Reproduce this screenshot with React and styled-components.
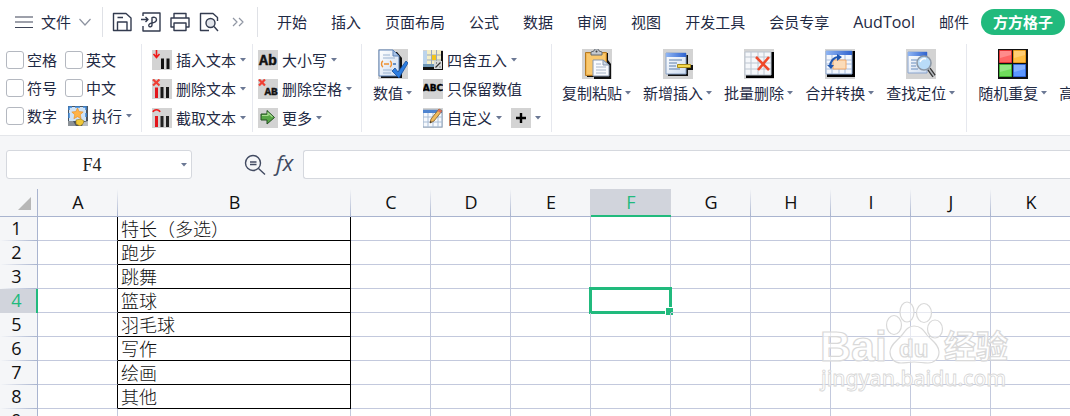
import React from 'react'
import styled, { createGlobalStyle, css } from 'styled-components'

const UI_FONT = '"Open Sans", "Noto Sans CJK SC", sans-serif'
const INK = '#1f2a44'
const GREEN = '#21ba7d'
const LINE = '#c3c9dd'
const LINE_DARK = '#a9b4cf'

const TABS = ['开始', '插入', '页面布局', '公式', '数据', '审阅', '视图', '开发工具', '会员专享', 'AudTool', '邮件', '方方格子']
const COLUMNS = ['A', 'B', 'C', 'D', 'E', 'F', 'G', 'H', 'I', 'J', 'K', 'L']
const ROWS = ['特长（多选）', '跑步', '跳舞', '篮球', '羽毛球', '写作', '绘画', '其他', '']

export default function App() {
	return (
		<Page>
			<GlobalStyle />

			<TopBar>
				<FileButton>
					<MenuIcon />
					文件
					<ChevronIcon />
				</FileButton>
				<QuickTools>
					<ToolButton aria-label="保存"><SaveIcon /></ToolButton>
					<ToolButton aria-label="输出为PDF"><PdfIcon /></ToolButton>
					<ToolButton aria-label="打印"><PrintIcon /></ToolButton>
					<ToolButton aria-label="打印预览"><PreviewIcon /></ToolButton>
					<ToolButton aria-label="更多工具"><MoreIcon /></ToolButton>
				</QuickTools>
				<Tabs>
					{TABS.map(tab => (
						<Tab key={tab} $active={tab === '方方格子'} $latin={tab === 'AudTool'}>{tab}</Tab>
					))}
				</Tabs>
			</TopBar>

			<Ribbon>
				<Group $left={6} $right={9}>
					<CheckGrid>
						<Check label="空格" />
						<Check label="英文" />
						<Check label="符号" />
						<Check label="中文" />
						<Check label="数字" />
						<RunButton><RunIcon />执行<Caret /></RunButton>
					</CheckGrid>
				</Group>

				<Group $left={10} $right={6}>
					<Stack>
						<SmallButton><InsertTextIcon />插入文本<Caret /></SmallButton>
						<SmallButton><DeleteTextIcon />删除文本<Caret /></SmallButton>
						<SmallButton><CutTextIcon />截取文本<Caret /></SmallButton>
					</Stack>
				</Group>

				<Group $left={5} $right={9}>
					<Stack>
						<SmallButton><CaseIcon />大小写<Caret /></SmallButton>
						<SmallButton><DeleteSpaceIcon />删除空格<Caret /></SmallButton>
						<SmallButton><ArrowIcon />更多<Caret /></SmallButton>
					</Stack>
				</Group>

				<Group $left={11} $right={10}>
					<BigButton><NumberIcon /><BigLabel>数值<Caret /></BigLabel></BigButton>
					<NumberStack>
						<SmallButton><RoundIcon />四舍五入<Caret /></SmallButton>
						<SmallButton><AbcIcon />只保留数值</SmallButton>
						<ButtonPair>
							<SmallButton><CustomIcon />自定义<Caret /></SmallButton>
							<SmallButton aria-label="添加"><PlusIcon /><Caret /></SmallButton>
						</ButtonPair>
					</NumberStack>
				</Group>

				<Group $left={10} $right={11}>
					<BigButton><PasteIcon /><BigLabel>复制粘贴<Caret /></BigLabel></BigButton>
					<BigButton><InsertIcon /><BigLabel>新增插入<Caret /></BigLabel></BigButton>
					<BigButton><BatchDeleteIcon /><BigLabel>批量删除<Caret /></BigLabel></BigButton>
					<BigButton><MergeIcon /><BigLabel>合并转换<Caret /></BigLabel></BigButton>
					<BigButton><FindIcon /><BigLabel>查找定位<Caret /></BigLabel></BigButton>
				</Group>

				<Group $left={11} $right={11}>
					<BigButton><RandomIcon /><BigLabel>随机重复<Caret /></BigLabel></BigButton>
					<BigButton><BlankIcon /><BigLabel>高级排序<Caret /></BigLabel></BigButton>
				</Group>
			</Ribbon>

			<FormulaBar>
				<NameBox>
					<NameInput aria-label="名称框" defaultValue="F4" />
					<NameArrow aria-label="展开名称框"><Caret /></NameArrow>
				</NameBox>
				<FormulaTools>
					<ToolButton aria-label="浏览公式"><ZoomIcon /></ToolButton>
					<FxButton>fx</FxButton>
				</FormulaTools>
				<FormulaInput aria-label="编辑栏" />
			</FormulaBar>

			<SheetArea>
				<Sheet>
					<colgroup>
						<Col $width={38} />
						{COLUMNS.map(name => <Col key={name} $width={name === 'B' ? 233 : 80} />)}
					</colgroup>
					<thead>
						<tr>
							<Corner aria-label="全选"><CornerIcon /></Corner>
							{COLUMNS.map(name => (
								<ColumnHead key={name} scope="col" $active={name === 'F'} $before={name === 'E'}>{name}</ColumnHead>
							))}
						</tr>
					</thead>
					<tbody>
						{ROWS.map((text, index) => (
							<tr key={index}>
								<RowHead scope="row" $active={index === 3}>{index + 1}</RowHead>
								{COLUMNS.map(name => (
									<Cell
										key={name}
										$boxed={name === 'B' && index < 8}
										$beforeBox={name === 'A' && index < 8}
									>
										{name === 'B' && text}
										{name === 'F' && index === 3 && <Selection />}
									</Cell>
								))}
							</tr>
						))}
					</tbody>
				</Sheet>
				<Watermark />
			</SheetArea>
		</Page>
	)
}

const Check = ({ label }) => (
	<CheckLabel>
		<CheckBox type="checkbox" />
		{label}
	</CheckLabel>
)

const Caret = () => (
	<svg width="6" height="4" viewBox="0 0 6 4" aria-hidden="true">
		<path d="M0 0h6L3 3.500z" fill="#6b7894" />
	</svg>
)


// * Top bar icons
const MenuIcon = () => (
	<svg width="18" height="14" viewBox="0 0 18 14" stroke="#3c4356" strokeWidth="1.200">
		<path d="M0 2h18M0 7h18M0 12.500h18" />
	</svg>
)

const ChevronIcon = () => (
	<svg width="12" height="8" viewBox="0 0 12 8" fill="none" stroke="#8d93a0" strokeWidth="1.200">
		<path d="M.5 1L6 7l5.500-6" />
	</svg>
)

const LineSvg = props => (
	<svg width="20" height="20" viewBox="0 0 20 20" fill="none" stroke="#333b4f" strokeWidth="1.400" strokeLinejoin="round" {...props} />
)

const SaveIcon = () => (
	<LineSvg>
		<path d="M1.500 1.500H14l5 4.500v12.500H1.500z" />
		<path d="M5.500 18.500V10h9.500v8.500M5.500 5.500H11" />
	</LineSvg>
)

const PdfIcon = () => (
	<LineSvg>
		<path d="M2 4V1h17v18H2v-5" />
		<path d="M0 7.500h7M4.500 5l2.500 2.500L4.500 10" />
		<path d="M10.500 6c2-1.500 5-.8 5 1.700s-3 3-4.500 3.300c-2 .4-3.600 1.300-3.200 2.800.5 1.700 3.200 1.200 3.200-.8V6" />
	</LineSvg>
)

const PrintIcon = () => (
	<LineSvg>
		<path d="M4 6V1.500h12V6M4 15H1V6h18v9h-3" />
		<path d="M4 11h12v7.500H4z" />
	</LineSvg>
)

const PreviewIcon = () => (
	<LineSvg>
		<path d="M10 18.500H1.500v-17H14l4.500 4V9" />
		<circle cx="11.500" cy="11" r="4.500" fill="#e1e4ea" />
		<path d="M15 14.500l4 4.500" />
	</LineSvg>
)

const MoreIcon = () => (
	<LineSvg stroke="#9096a3" strokeWidth="1.200">
		<path d="M5 6l4 4-4 4M11 6l4 4-4 4" />
	</LineSvg>
)

const ZoomIcon = () => (
	<svg width="22" height="22" viewBox="0 0 22 22" fill="none" stroke="#414a61" strokeWidth="1.400">
		<circle cx="9" cy="9" r="7.500" />
		<path d="M14.500 14.500l6.500 6M6 8h6.500M6 10.500h6.500" />
	</svg>
)


// * Ribbon icons, 20px ones on a grey tile
const Tile = ({ children }) => (
	<svg width="20" height="20" viewBox="0 0 20 20">
		<path d="M0 0h20v20H0z" fill="#d3d3d3" />
		{children}
	</svg>
)

const RunIcon = () => (
	<Tile>
		<path d="M0 0h20v20H0z" fill="#4a5460" />
		<path d="M1 1h17v14H1z" fill="#cfe3f7" />
		<path d="M1 4V1h3M7 1h5M15 1h3v3M1 7v5M18 7v4" stroke="#3f86d4" strokeWidth="1.500" fill="none" />
		<path d="M9.500 2l1.700 3.600 4 .4-3 2.700.9 4-3.600-2-3.600 2 .9-4-3-2.700 4-.4z" fill="#ffb347" stroke="#e88a1a" strokeWidth=".6" />
		<path d="M8 14l5-1 3 2-1 3-3 2-4-2z" fill="#f0c838" stroke="#95741a" strokeWidth=".6" />
		<path d="M0 15h5l3 5H0z" fill="#8b9197" />
		<path d="M16 16l4-1v5h-6z" fill="#b7bcc0" />
	</Tile>
)

const InsertTextIcon = () => (
	<Tile>
		<path d="M4.500 0v7M1.500 4l3 3.500 3-3.500" stroke="#f01818" strokeWidth="1.600" fill="none" />
		<path d="M9 8.500h3V19H9zM14.500 8.500h3V19h-3z" fill="#111" />
	</Tile>
)

const DeleteTextIcon = () => (
	<Tile>
		<path d="M1 .5l6.500 6M7.500.5L1 6.500" stroke="#ef4035" strokeWidth="2.200" />
		<path d="M3 8.500h3V19H3z" fill="#e3161c" />
		<path d="M8.500 8h3v11h-3zM14 8h3v11h-3z" fill="#181818" />
	</Tile>
)

const CutTextIcon = () => (
	<Tile>
		<path d="M1 4c1-3 6-3 7 0" stroke="#ef1d1d" strokeWidth="1.600" fill="none" />
		<path d="M3 8h3v11H3z" fill="#e3161c" />
		<path d="M8.500 8h3v11h-3zM14 8h3v11h-3z" fill="#222" />
	</Tile>
)

const CaseIcon = () => (
	<Tile>
		<text x="10" y="15" textAnchor="middle" fontFamily="Liberation Mono" fontWeight="bold" fontSize="15" fill="#111" stroke="#111" strokeWidth=".4">Ab</text>
	</Tile>
)

const DeleteSpaceIcon = () => (
	<Tile>
		<text x="13" y="16" textAnchor="middle" fontFamily="Liberation Mono" fontWeight="bold" fontSize="11" fill="#111" stroke="#111" strokeWidth=".4">AB</text>
		<path d="M1 .5l6 6M7 .5l-6 6" stroke="#ef4035" strokeWidth="2.200" />
	</Tile>
)

const ArrowIcon = () => (
	<Tile>
		<path d="M3 6h6V2.500l7.500 7L9 16v-4H3z" fill="#57a646" stroke="#244f22" />
		<path d="M4 7.500h6V5l4.500 4" stroke="#a8dc92" strokeWidth="1.200" fill="none" />
	</Tile>
)

const RoundIcon = () => (
	<Tile>
		<path d="M2 1h18v19H0v-3z" fill="#111" />
		<path d="M4 0h14v14H4z" fill="#f4eec5" />
		<path d="M4 5h14M4 10h14M8.500 0v14M13.500 0v14" stroke="#9aa9bb" />
		<path d="M9 5h4v5H9z" fill="#f2c51a" />
		<path d="M0 1h4v13H0z" fill="#bcd4ec" />
		<path d="M0 14h14v3H0z" fill="#6d96b5" />
		<path d="M11 11h8v8h-8z" fill="#d4d8da" />
		<path d="M12.500 17.500l5-5M13 13h1M16.500 17h1" stroke="#333" strokeWidth="1.200" />
	</Tile>
)

const AbcIcon = () => (
	<Tile>
		<text x="10" y="12" textAnchor="middle" fontFamily="DejaVu Sans" fontWeight="bold" fontSize="9" fill="#000" stroke="#000" strokeWidth=".4">ABC</text>
	</Tile>
)

const CustomIcon = () => (
	<Tile>
		<path d="M0 2h19v17H0z" fill="#f6f9fd" stroke="#8aa1bd" />
		<path d="M0 2h19v3H0z" fill="#4d83cf" />
		<path d="M0 9h19M0 14h19M5 5v14M10 5v14M15 5v14" stroke="#a9bdd6" />
		<path d="M7 15l1-4 8-10 3 2-8 10z" fill="#f0bb5c" stroke="#7d5a2a" strokeWidth=".8" />
		<path d="M16 1l3 2-1.500 2-3-2z" fill="#db7162" />
		<path d="M7 15l.5-2 1.300 1z" fill="#222" />
	</Tile>
)

const PlusIcon = () => (
	<Tile>
		<path d="M10 5v10M5 10h10" stroke="#000" strokeWidth="2.400" />
	</Tile>
)


// * Ribbon icons, 30px
const BigTile = ({ children }) => (
	<svg width="30" height="30" viewBox="0 0 30 30">
		<defs>
			<linearGradient id="blueBar" x1="0" y1="0" x2="1" y2="0">
				<stop offset="0" stopColor="#8fb5f3" />
				<stop offset="1" stopColor="#2f63cf" />
			</linearGradient>
			<linearGradient id="paper" x1="0" y1="0" x2="1" y2="1">
				<stop offset="0" stopColor="#fff" />
				<stop offset="1" stopColor="#cddcf0" />
			</linearGradient>
		</defs>
		<path d="M0 0h30v30H0z" fill="#d3d3d3" />
		{children}
	</svg>
)

const NumberIcon = () => (
	<BigTile>
		<path d="M3 3h16l5 6v20H3z" fill="#111" />
		<path d="M1 1h14l6 6v20H1z" fill="url(#paper)" stroke="#5d82b7" />
		<path d="M15 1v6h6z" fill="#a9c3e6" stroke="#5d82b7" />
		<path d="M5 6h7M5 9h12M5 21h9M5 24h8" stroke="#9bb3d1" />
		<path d="M5 12c-2 1-2 5 0 6M12 12c2 1 2 5 0 6M6 15h5" stroke="#ee9132" strokeWidth="1.500" fill="none" />
		<path d="M15 15h3" stroke="#3c71b5" strokeWidth="1.500" />
		<path d="M14 22l3-3 3 4 8-11 2 2-9 15z" fill="#2d7de0" stroke="#174e9b" strokeWidth=".8" />
	</BigTile>
)

const PasteIcon = () => (
	<BigTile>
		<path d="M5 4h21v7l3 4v15H12v-2H5z" fill="#111" />
		<path d="M3.500 3.500h21v23h-21z" fill="#f2b653" stroke="#b67a20" />
		<path d="M5 5h18v20H5z" fill="#f9c86e" />
		<path d="M9 3l3-1c0-3 5-3 5 0l3 1v3H9z" fill="#c3c8ce" stroke="#626870" />
		<circle cx="14.500" cy="2.500" r="1" fill="#444" />
		<path d="M11 11h10l6 5v11H11z" fill="#f9fbff" stroke="#8897ad" />
		<path d="M21 11v5h6z" fill="#cbd8e8" stroke="#8897ad" />
		<path d="M14 15h5M14 18h10M14 21h10M14 24h10" stroke="#a8b6c9" />
	</BigTile>
)

const InsertIcon = () => (
	<BigTile>
		<path d="M5 6h20v21H5zM18 16h12v5H18z" fill="#111" />
		<path d="M3 4h20v21H3z" fill="url(#paper)" stroke="#8aa3c7" />
		<path d="M3 4h20v4H3z" fill="url(#blueBar)" />
		<path d="M6 11h13M6 14h8M6 17h7M6 20h11" stroke="#5c7fa9" />
		<path d="M14.500 15.500h13v3h-13z" fill="#f3d84e" stroke="#a88a18" />
	</BigTile>
)

const BatchDeleteIcon = () => (
	<BigTile>
		<path d="M2 3h28v26H2z" fill="#000" />
		<path d="M1 3h26v23H1z" fill="#f5f7fa" stroke="#bcc5d0" />
		<path d="M1 8h26M1 14h26M1 20h26M7 3v23M14 3v23M20 3v23" stroke="#bcc5d0" />
		<path d="M12 8l13 13M25 8L14 21" stroke="#ef4a2b" strokeWidth="2.600" />
	</BigTile>
)

const MergeIcon = () => (
	<BigTile>
		<path d="M2 2h28v26H2z" fill="#000" />
		<path d="M1 2h26v23H1z" fill="#f3f7fd" stroke="#8ba6cf" />
		<path d="M1 2h26v4H1z" fill="url(#blueBar)" />
		<path d="M1 11h26M1 15h26M1 20h26M7 6v19M14 6v19M20 6v19" stroke="#a8bddd" />
		<path d="M8 11h13v9H8z" fill="#fbdcb9" stroke="#f0a868" />
		<path d="M5 18c0-6 4-10 9-10" stroke="#1e56b0" strokeWidth="2" fill="none" />
		<path d="M12 5l5 3-5 4zM2 16h7l-3 4z" fill="#1e56b0" />
	</BigTile>
)

const FindIcon = () => (
	<BigTile>
		<path d="M2 3h19v21H2z" fill="url(#paper)" stroke="#8ca6cf" />
		<path d="M2 3h19v4H2z" fill="url(#blueBar)" />
		<path d="M5 11h6M5 14h5M5 17h5M5 20h7" stroke="#6b8ebd" />
		<path d="M23 20l5 7" stroke="#333" strokeWidth="4" />
		<path d="M23 20l5 7" stroke="#b5b9bd" strokeWidth="1.500" />
		<circle cx="18" cy="14" r="7" fill="#b9dcf8" stroke="#8c98a6" strokeWidth="1.600" />
		<path d="M14 13c1-3 4-4 6-3" stroke="#fff" strokeWidth="1.500" fill="none" />
	</BigTile>
)

const RandomIcon = () => (
	<svg width="30" height="30" viewBox="0 0 30 30">
		<path d="M0 0h30v30H0z" fill="#111" />
		<path d="M1.500 1.500h12v12h-12z" fill="#ff6464" stroke="#e13434" />
		<path d="M15.500 1.500h12v12h-12z" fill="#ffbd45" stroke="#e59a1d" />
		<path d="M1.500 15.500h12v12h-12z" fill="#70dc5c" stroke="#3fae32" />
		<path d="M15.500 15.500h12v12h-12z" fill="#5c97ff" stroke="#3268d8" />
		<path d="M2 2h11v4L2 9zM16 2h11v4l-11 3zM2 16h11v4L2 23zM16 16h11v4l-11 3z" fill="#fff" opacity=".25" />
	</svg>
)

const BlankIcon = () => <svg width="30" height="30" viewBox="0 0 30 30" />

const CornerIcon = () => (
	<svg width="13" height="13" viewBox="0 0 13 13">
		<path d="M13 0v13H0z" fill="#b7b7b7" />
	</svg>
)

// Paw logo and address printed over the grid
const Watermark = () => (
	<WatermarkSvg width="196" height="94" viewBox="0 0 196 94">
		<g fill="#fff" fillOpacity=".6" stroke="#d9d9d9" strokeWidth="1.200">
			<ellipse cx="76" cy="25" rx="7.500" ry="9.500" />
			<ellipse cx="89" cy="12" rx="7" ry="10" />
			<ellipse cx="106" cy="13" rx="7.500" ry="9.500" />
			<ellipse cx="117" cy="29" rx="7.500" ry="9" />
			<path d="M96 26c7 0 10 5 13 9 4 5 12 9 12 17 0 7-5 11-11 11-5 0-9-1-14-1s-9 1-13 1c-7 0-11-5-11-11 0-7 7-11 12-17 3-4 6-9 12-9z" />
			<text x="2" y="61" fontFamily="Liberation Sans" fontWeight="bold" fontSize="43">Bai</text>
			<text x="81" y="57" fontFamily="Liberation Sans" fontWeight="bold" fontSize="24">du</text>
			<text x="126" y="58" fontFamily="Noto Sans CJK SC" fontWeight="bold" fontSize="32">经验</text>
		</g>
		<text x="3" y="86" fontFamily="Noto Sans" fontWeight="500" fontSize="21" fill="#fff" fillOpacity=".7" stroke="#d6d6d6" strokeWidth=".8">jingyan.baidu.com</text>
	</WatermarkSvg>
)


// * This is the styled component section
const GlobalStyle = createGlobalStyle`
	* {
		box-sizing: border-box;
	}
	body {
		margin: 0;
		background: #fff;
	}
	button, input {
		border: 0;
		padding: 0;
		margin: 0;
		background: none;
		color: inherit;
		font: inherit;
	}
	svg {
		display: block;
		flex: none;
	}
`
const Page = styled.div`
	display: flex;
	flex-direction: column;
	height: 100vh;
	overflow: hidden;
	background: #f5f6f8;
	color: ${INK};
	font-family: ${UI_FONT};
	font-size: 15px;
	line-height: 20px;
	white-space: nowrap;
`
const TopBar = styled.header`
	display: flex;
	align-items: center;
	height: 43px;
	flex: none;
	background: #fff;
`
const FileButton = styled.button`
	display: flex;
	align-items: center;
	gap: 8px;
	height: 30px;
	padding: 0 11px 0 15px;
	border-right: 1px solid #dfe1e6;
`
const QuickTools = styled.div`
	display: flex;
	align-items: center;
	gap: 9px;
	height: 30px;
	padding: 0 9px;
	border-right: 1px solid #dfe1e6;
`
const ToolButton = styled.button`
	display: flex;
	align-items: center;
`
const Tabs = styled.nav`
	display: flex;
	padding-left: 7px;
`
const Tab = styled.button`
	flex: none;
	height: 26px;
	padding: 0 12px;
	border-radius: 13px;
	font-size: ${({ $latin }) => $latin ? 16 : 15}px;
	${({ $active }) => $active && css`
		background: ${GREEN};
		color: #fff;
		font-weight: 700;
	`}
`
const Ribbon = styled.section`
	display: flex;
	height: 93px;
	flex: none;
	overflow: hidden;
	padding: 1px 0 3px;
	background: #fff;
	border-bottom: 1px solid #e4e6ea;
`
const Group = styled.div`
	display: flex;
	align-items: flex-start;
	flex: none;
	gap: 12px;
	padding: 5px ${({ $right }) => $right}px 0 ${({ $left }) => $left}px;
	border-right: 1px solid #e6e8ee;
`
const CheckGrid = styled.div`
	display: grid;
	grid-template-columns: 59px auto;
	grid-auto-rows: 28px;
	align-items: center;
	justify-items: start;
	margin-top: -3px;
`
const CheckLabel = styled.label`
	display: flex;
	align-items: center;
	gap: 3px;
`
const CheckBox = styled.input`
	appearance: none;
	width: 18px;
	height: 18px;
	background: #fff;
	border: 1px solid #b4b8c0;
	border-radius: 3px;
`
const Stack = styled.div`
	display: flex;
	flex-direction: column;
	gap: 9px;
	padding-top: 1px;
`
const NumberStack = styled(Stack)`
	margin-left: -1px;
`
const SmallButton = styled.button`
	display: flex;
	align-items: center;
	gap: 4px;
`
const RunButton = styled(SmallButton)`
	padding-left: 3px;
`
const ButtonPair = styled.div`
	display: flex;
	gap: 9px;
`
const BigButton = styled.button`
	display: flex;
	flex-direction: column;
	align-items: center;
	gap: 4px;
`
const BigLabel = styled.span`
	display: flex;
	align-items: center;
	gap: 3px;
`
const FormulaBar = styled.section`
	display: flex;
	align-items: center;
	height: 53px;
	flex: none;
	padding: 4px 0 0 6px;
`
const NameBox = styled.div`
	display: flex;
	width: 186px;
	height: 29px;
	background: #fff;
	border: 1px solid #d5d8de;
	border-radius: 3px;
`
const NameInput = styled.input`
	flex: 1;
	min-width: 0;
	color: #222;
	font-family: "Liberation Serif", serif;
	font-size: 18px;
	text-align: center;
`
const NameArrow = styled.button`
	display: flex;
	align-items: center;
	justify-content: center;
	width: 14px;
`
const FormulaTools = styled.div`
	display: flex;
	align-items: center;
	gap: 10px;
	width: 111px;
	padding-left: 52px;
`
const FxButton = styled.button`
	padding-bottom: 5px;
	color: #414a61;
	font-size: 22px;
	font-style: italic;
	font-weight: 400;
`
const FormulaInput = styled.input`
	flex: 1;
	height: 29px;
	background: #fff;
	border: 1px solid #d5d8de;
	border-right: 0;
	border-radius: 3px 0 0 3px;
`
const SheetArea = styled.main`
	flex: 1;
	min-height: 0;
	overflow: hidden;
	position: relative;
	background: #fff;
`
const Sheet = styled.table`
	width: 0;
	border-collapse: separate;
	border-spacing: 0;
	table-layout: fixed;
`
const Col = styled.col`
	width: ${({ $width }) => $width}px;
`
const head = css`
	padding: 0 0 2px;
	background: #f5f6f8;
	color: #111;
	font-size: 18px;
	font-weight: 400;
	line-height: 20px;
`
const Corner = styled.th`
	${head}
	height: 28px;
	border-bottom: 1px solid ${LINE_DARK};
	border-right: 1px solid ${LINE_DARK};
	svg {
		margin: 4px 6px 0 auto;
	}
`
const ColumnHead = styled.th`
	${head}
	height: 28px;
	border-bottom: 1px solid ${LINE_DARK};
	background: linear-gradient(#f5f6f8, ${LINE_DARK}) right / 1px 100% no-repeat #f5f6f8;
	${({ $before }) => $before && css`
		background: linear-gradient(#d1d4dc, #d1d4dc) right / 1px 100% no-repeat #f5f6f8;
	`}
	${({ $active }) => $active && css`
		padding-bottom: 1px;
		background: #d1d4dc;
		border-bottom: 2px solid ${GREEN};
		color: ${GREEN};
	`}
`
const RowHead = styled.th`
	${head}
	height: 24px;
	padding-right: 4px;
	border-right: 1px solid ${LINE_DARK};
	background: linear-gradient(90deg, #f5f6f8, ${LINE_DARK}) bottom / 100% 1px no-repeat #f5f6f8;
	${({ $active }) => $active && css`
		padding-right: 3px;
		background: #d1d4dc;
		border-right: 2px solid ${GREEN};
		color: ${GREEN};
	`}
`
const Cell = styled.td`
	position: relative;
	height: 24px;
	padding: 0 3px 2px;
	border-right: 1px solid ${LINE};
	border-bottom: 1px solid ${LINE};
	color: #111;
	font-family: "Noto Sans CJK SC", sans-serif;
	font-size: 18px;
	font-weight: 300;
	line-height: 20px;
	${({ $boxed }) => $boxed && css`
		border-color: #000;
	`}
	${({ $beforeBox }) => $beforeBox && css`
		border-right-color: #000;
	`}
`
const Selection = styled.div`
	position: absolute;
	inset: -2px;
	border: 3px solid ${GREEN};
	&::after {
		content: '';
		position: absolute;
		right: -5px;
		bottom: -5px;
		width: 7px;
		height: 7px;
		background: ${GREEN};
		border: 1px solid #fff;
	}
`
const WatermarkSvg = styled.svg`
	position: absolute;
	top: 111px;
	right: 56px;
	pointer-events: none;
`
